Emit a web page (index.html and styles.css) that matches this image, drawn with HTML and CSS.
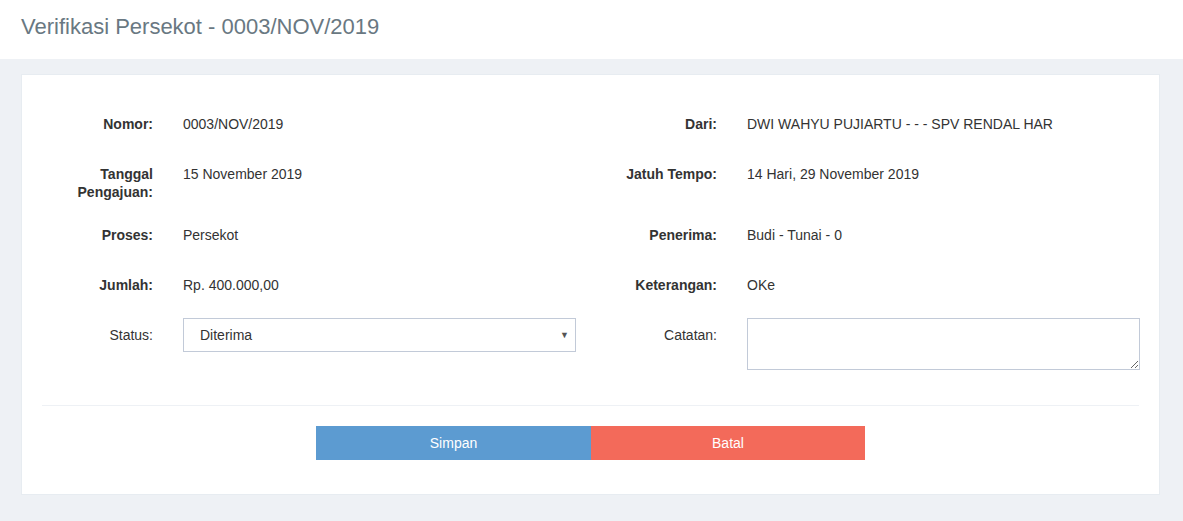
FILE: index.html
```html
<!DOCTYPE html>
<html>
<head>
<meta charset="utf-8">
<link rel="stylesheet" href="styles.css">
</head>
<body>
<div class="page-head">
  <h1 class="page-title">Verifikasi Persekot - 0003/NOV/2019</h1>
</div>
<div class="page-content">
  <div class="card">
    <div class="form">
      <div class="row">
        <div class="label bold">Nomor:</div><div class="value">0003/NOV/2019</div>
        <div class="label bold">Dari:</div><div class="value">DWI WAHYU PUJIARTU - - - SPV RENDAL HAR</div>
      </div>
      <div class="row">
        <div class="label bold">Tanggal Pengajuan:</div><div class="value">15 November 2019</div>
        <div class="label bold">Jatuh Tempo:</div><div class="value">14 Hari, 29 November 2019</div>
      </div>
      <div class="row">
        <div class="label bold">Proses:</div><div class="value">Persekot</div>
        <div class="label bold">Penerima:</div><div class="value">Budi - Tunai - 0</div>
      </div>
      <div class="row">
        <div class="label bold">Jumlah:</div><div class="value">Rp. 400.000,00</div>
        <div class="label bold">Keterangan:</div><div class="value">OKe</div>
      </div>
      <div class="row">
        <div class="label">Status:</div>
        <div class="field">
          <div class="select-wrap">
            <select class="control select"><option>Diterima</option></select>
            <span class="arrow">▼</span>
          </div>
        </div>
        <div class="label">Catatan:</div>
        <div class="field"><textarea class="control textarea"></textarea></div>
      </div>
    </div>
    <div class="actions">
      <button class="btn btn-blue">Simpan</button>
      <button class="btn btn-red">Batal</button>
    </div>
  </div>
</div>
</body>
</html>
```
FILE: styles.css
```css
* { box-sizing: border-box; }
html, body { margin: 0; padding: 0; }
body {
  font-family: "Liberation Sans", Arial, sans-serif;
  font-size: 14px;
  color: #333;
  background: #eef1f5;
  width: 1183px;
  height: 521px;
  overflow: hidden;
}
.page-head {
  background: #fff;
  height: 59px;
  padding: 14px 21px 0;
}
.page-title {
  margin: 0;
  font-weight: 400;
  font-size: 22px;
  line-height: 26px;
  color: #697882;
}
.page-content {
  padding: 15px 23px 0 21px;
}
.card {
  background: #fff;
  border: 1px solid #e7ecf1;
  padding: 32px 20px 0;
  height: 421px;
}
.row {
  display: grid;
  grid-template-columns: 111px 393px 111px 393px;
  column-gap: 30px;
  align-items: start;
  min-height: 34px;
  margin-bottom: 16px;
}
.row:nth-child(2) { margin-bottom: 17px; }
.row:last-child { margin-bottom: 0; }
.label {
  text-align: right;
  padding-top: 8px;
  line-height: 18px;
}
.bold { font-weight: 700; }
.value {
  padding-top: 8px;
  line-height: 18px;
}
.select-wrap { position: relative; }
.control {
  display: block;
  width: 393px;
  border: 1px solid #c2cad8;
  background: #fff;
  font-family: "Liberation Sans", Arial, sans-serif;
  font-size: 14px;
  color: #333;
  border-radius: 0;
  outline: none;
  margin: 0;
}
.select {
  -webkit-appearance: none;
  appearance: none;
  height: 34px;
  padding: 0 16px;
}
.arrow {
  position: absolute;
  right: 7px;
  top: 12px;
  font-size: 9px;
  line-height: 10px;
  color: #555;
}
.textarea {
  height: 52px;
  padding: 6px 12px;
  resize: vertical;
}
.actions {
  border-top: 1px solid #eef1f5;
  margin-top: 35px;
  padding-top: 20px;
  display: flex;
  justify-content: center;
}
.btn {
  width: 275px;
  height: 34px;
  border: none;
  margin: 0;
  font-family: "Liberation Sans", Arial, sans-serif;
  font-size: 14px;
  color: #fff;
  border-radius: 0;
}
.btn-red { width: 274px; }
.btn-blue { background: #5c9bd1; }
.btn-red { background: #f36a5a; }
```
